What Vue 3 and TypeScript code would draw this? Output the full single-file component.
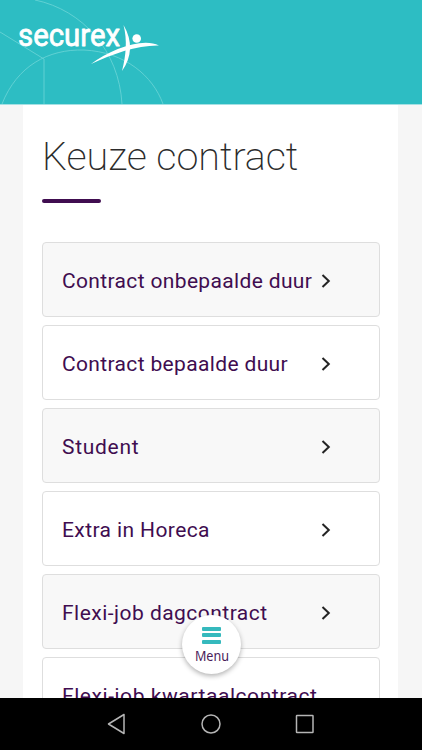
<script setup lang="ts">
interface Contract {
  id: string
  label: string
}

const contracts: Contract[] = [
  { id: 'onbepaald', label: 'Contract onbepaalde duur' },
  { id: 'bepaald', label: 'Contract bepaalde duur' },
  { id: 'student', label: 'Student' },
  { id: 'horeca', label: 'Extra in Horeca' },
  { id: 'flexi-dag', label: 'Flexi-job dagcontract' },
  { id: 'flexi-kwartaal', label: 'Flexi-job kwartaalcontract' },
]
</script>

<template>
  <div class="screen">
    <header class="header">
      <svg class="brand" viewBox="0 0 422 104" aria-label="securex">
        <g class="lines">
          <path d="M0 32 L44 59 V104" />
          <path d="M35 0 C83 10 119 51 122 104" />
          <path d="M2 104 C17 66 48 49 84 50 C125 52 153 76 163 104" />
        </g>
        <text class="wordmark" x="18" y="45.500" textLength="102" lengthAdjust="spacingAndGlyphs">securex</text>
        <g class="figure">
          <path d="M123.500 25 C133 41 132 57 122 71 C126 56 127.500 40 123.500 25 Z" />
          <path d="M91 64 C111 49 143 37 159 45.500 C138 45 112 54 91 64 Z" />
          <circle cx="136.700" cy="38.500" r="4.300" />
        </g>
      </svg>
    </header>

    <main class="content">
      <h1 class="title">Keuze contract</h1>
      <div class="rule"></div>
      <ul class="list">
        <li v-for="(contract, index) in contracts" :key="contract.id" class="card">
          <span class="label" :class="contract.id">{{ contract.label }}</span>
          <svg v-if="index < contracts.length - 1" class="chevron" viewBox="0 0 10 14">
            <path d="M1.500 1 L7.800 7 L1.500 13" />
          </svg>
        </li>
      </ul>
    </main>

    <button class="menu" type="button">
      <span class="bars"><i></i><i></i><i></i></span>
      <span class="menu-label">Menu</span>
    </button>

    <nav class="navbar">
      <svg viewBox="0 0 20 22"><path d="M17 1.500 V20.500 L1.500 11 Z" /></svg>
      <svg viewBox="0 0 20 22"><circle cx="10" cy="11" r="9" /></svg>
      <svg viewBox="0 0 20 22"><rect x="1.500" y="2.500" width="16.500" height="17" rx="0.500" /></svg>
    </nav>
  </div>
</template>

<style>
body {
  margin: 0;
}
</style>

<style scoped>
.screen {
  position: relative;
  display: flex;
  flex-direction: column;
  width: 422px;
  height: 750px;
  overflow: hidden;
  background: #f6f6f6;
  font-family: Roboto, "Noto Sans", sans-serif;
}
.header {
  flex: none;
  height: 104px;
  background: #2dbdc3;
  border-bottom: 1px solid #a5e0e3;
}
.brand {
  display: block;
  width: 422px;
  height: 104px;
}
.lines {
  fill: none;
  stroke: #66d2d5;
  stroke-width: 0.9;
}
.wordmark {
  fill: #fff;
  stroke: #fff;
  stroke-width: 0.8;
  stroke-linejoin: round;
  font-family: Roboto, sans-serif;
  font-size: 31px;
  font-weight: 400;
}
.figure {
  fill: #fff;
}
.content {
  flex: 1;
  min-height: 0;
  box-sizing: border-box;
  width: 375px;
  margin-left: 23px;
  padding: 27px 18px 0 19px;
  overflow: hidden;
  background: #fff;
}
.title {
  margin: 0;
  height: 50px;
  line-height: 50px;
  color: #2b2b2b;
  font-size: 39.500px;
  font-weight: 200;
  letter-spacing: -0.05px;
  white-space: nowrap;
}
.rule {
  width: 59px;
  height: 4px;
  margin-top: 17px;
  border-radius: 2px;
  background: #400d50;
}
.list {
  display: flex;
  flex-direction: column;
  gap: 8px;
  margin: 39px 0 0;
  padding: 0;
  list-style: none;
}
.card {
  display: flex;
  flex: none;
  align-items: center;
  justify-content: space-between;
  box-sizing: border-box;
  height: 75px;
  padding: 2px 48px 0 19px;
  border: 1px solid #dedede;
  border-radius: 4px;
  background: #fff;
}
.card:nth-child(odd) {
  background: #f8f8f8;
}
.label {
  color: #400d50;
  font-size: 21px;
  letter-spacing: 0.35px;
  white-space: nowrap;
}
.student {
  letter-spacing: 0.7px;
}
.horeca {
  letter-spacing: 0.4px;
}
.flexi-dag {
  letter-spacing: 0.47px;
}
.flexi-kwartaal {
  letter-spacing: 0.56px;
}
.chevron {
  flex: none;
  width: 10px;
  height: 14px;
  fill: none;
  stroke: #242424;
  stroke-width: 2;
}
.menu {
  position: absolute;
  left: 182px;
  top: 615px;
  display: flex;
  flex-direction: column;
  align-items: center;
  box-sizing: border-box;
  width: 59px;
  height: 59px;
  padding: 12px 0 0;
  border: 0;
  border-radius: 50%;
  background: #fff;
  box-shadow: 0 2px 5px rgba(0, 0, 0, 0.3);
}
.bars {
  display: flex;
  flex-direction: column;
  gap: 2.400px;
}
.bars i {
  width: 19px;
  height: 4px;
  border-radius: 1px;
  background: #35b9bd;
}
.menu-label {
  margin-top: 3px;
  color: #4a1c5a;
  font-family: "Noto Sans", sans-serif;
  font-size: 14px;
  line-height: 18px;
  transform: scaleX(0.9);
}
.navbar {
  display: flex;
  flex: none;
  align-items: center;
  justify-content: center;
  gap: 74px;
  height: 52px;
  background: #000;
}
.navbar svg {
  width: 20px;
  height: 22px;
  fill: none;
  stroke: #b5b5b5;
  stroke-width: 1.5;
  stroke-linejoin: round;
}
</style>
